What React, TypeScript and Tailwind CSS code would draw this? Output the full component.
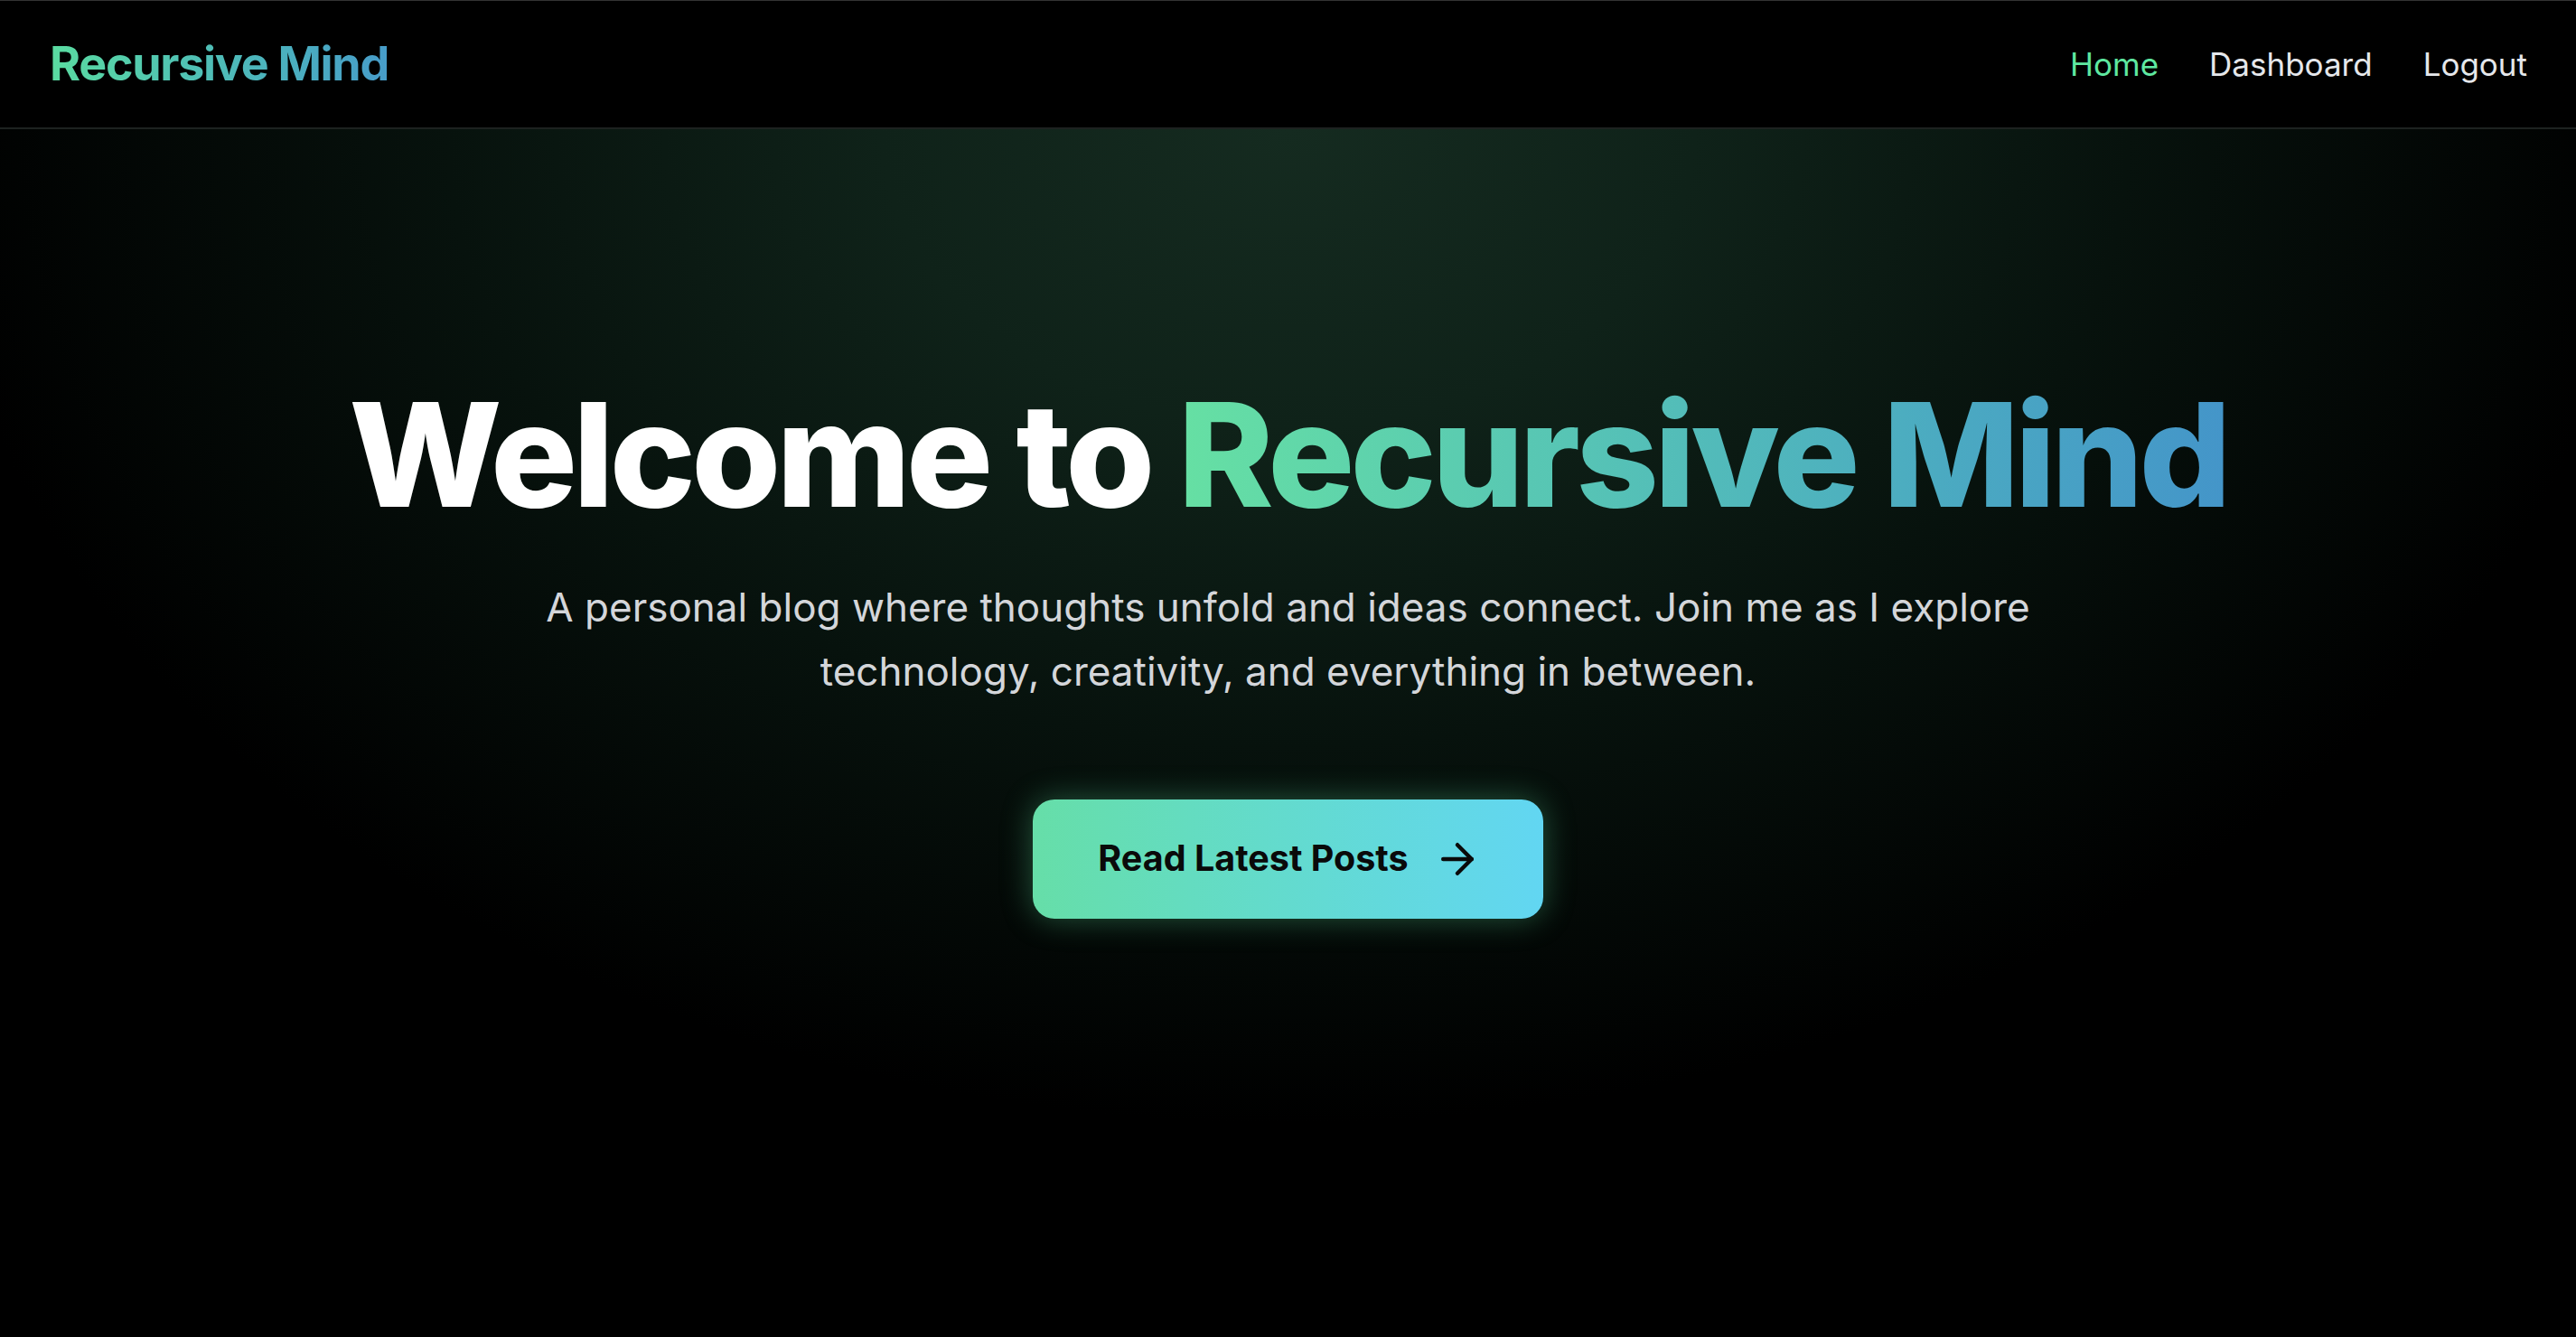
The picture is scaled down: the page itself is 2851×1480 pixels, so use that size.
import { ArrowRight } from "lucide-react";

const links = [
  { label: "Home", active: true },
  { label: "Dashboard", active: false },
  { label: "Logout", active: false },
];

function Navbar() {
  return (
    <nav className="flex h-[143px] items-center justify-between border-t border-b-2 border-t-[#333] border-b-[#1d2220] bg-black pl-[55px] pr-[54px]">
      <a
        href="#"
        className="bg-gradient-to-r from-[#5adba0] to-[#479cc9] bg-clip-text text-[52px] font-bold tracking-tight text-transparent"
      >
        Recursive Mind
      </a>
      <div className="flex items-center gap-[56px] text-[35px]">
        {links.map((l) => (
          <a key={l.label} href="#" className={l.active ? "text-[#5ee8a0]" : "text-[#e5e7eb]"}>
            {l.label}
          </a>
        ))}
      </div>
    </nav>
  );
}

export default function App() {
  return (
    <div className="flex min-h-[1480px] flex-col bg-black font-['Inter',sans-serif]">
      <Navbar />
      <main className="flex flex-1 flex-col items-center bg-[radial-gradient(ellipse_1500px_1100px_at_50%_0%,#152b20_0%,#0f2219_30%,#07120d_62%,#000_100%)] pt-[280px] text-center">
        <h1 className="text-[160px] leading-none font-extrabold tracking-[-0.03em] text-white">
          Welcome to{" "}
          <span className="bg-gradient-to-r from-[#66e0a3] to-[#4495c9] bg-clip-text text-transparent">
            Recursive Mind
          </span>
        </h1>
        <p className="mt-[54px] max-w-[1760px] text-[44px] leading-[71px] text-[#d4d6da]">
          A personal blog where thoughts unfold and ideas connect. Join me as I explore
          technology, creativity, and everything in between.
        </p>
        <a
          href="#"
          className="mt-[106px] flex h-[132px] items-center gap-[27px] rounded-[24px] bg-gradient-to-r from-[#66dea8] to-[#62d6f2] pl-[72px] pr-[68px] text-[39.5px] font-bold text-[#0a0a0a] shadow-[0_0_34px_rgba(94,225,160,0.35)]"
        >
          Read Latest Posts
          <ArrowRight size={54} strokeWidth={2} />
        </a>
      </main>
    </div>
  );
}
